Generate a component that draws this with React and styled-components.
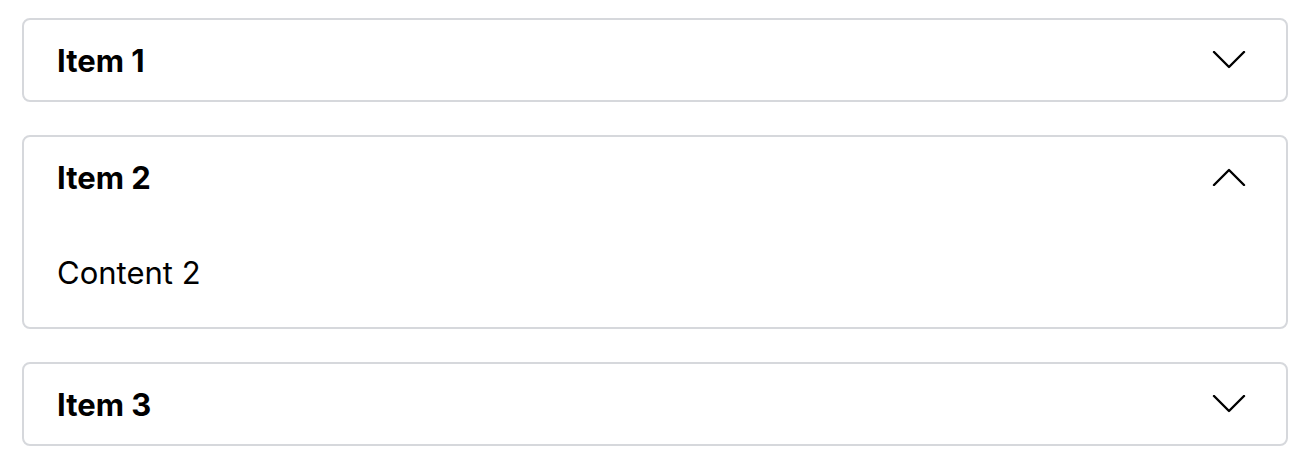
import { useState } from "react";
import styled, { createGlobalStyle } from "styled-components";

const GlobalStyle = createGlobalStyle`
  body {
    margin: 0;
    background: #ffffff;
    font-family: Inter, "Liberation Sans", sans-serif;
    color: #000000;
  }
`;

const items = [
  { id: 1, title: "Item 1", content: "Content 1" },
  { id: 2, title: "Item 2", content: "Content 2" },
  { id: 3, title: "Item 3", content: "Content 3" },
];

const Chevron = ({ up }) => (
  <svg width="34" height="18" viewBox="0 0 34 18" fill="none">
    <path
      d={up ? "M2 17 L17 2 L32 17" : "M2 1 L17 16 L32 1"}
      stroke="#000"
      strokeWidth="2.4"
      strokeLinecap="round"
      strokeLinejoin="round"
    />
  </svg>
);

const App = () => {
  const [open, setOpen] = useState(2);

  return (
    <>
      <GlobalStyle />
      <Page>
        {items.map((item) => {
          const isOpen = open === item.id;
          return (
            <Item key={item.id}>
              <Header onClick={() => setOpen(isOpen ? null : item.id)}>
                <Title>{item.title}</Title>
                <IconWrap>
                  <Chevron up={isOpen} />
                </IconWrap>
              </Header>
              {isOpen && <Content>{item.content}</Content>}
            </Item>
          );
        })}
      </Page>
    </>
  );
};

const Page = styled.div`
  padding: 18px 24px 0 22px;
  display: flex;
  flex-direction: column;
  gap: 33px;
`;

const Item = styled.div`
  border: 2px solid #d6d8dc;
  border-radius: 8px;
  background: #fff;
`;

const Header = styled.button`
  width: 100%;
  height: 80px;
  padding: 0 40px 0 33px;
  display: flex;
  align-items: center;
  justify-content: space-between;
  background: none;
  border: none;
  cursor: pointer;
  font-family: inherit;
  color: inherit;
`;

const Title = styled.span`
  font-size: 31px;
  font-weight: 700;
  line-height: 1;
`;

const IconWrap = styled.span`
  display: flex;
  align-items: center;
`;

const Content = styled.div`
  padding: 38px 33px 36px;
  font-size: 31px;
  line-height: 36px;
`;

export default App;
